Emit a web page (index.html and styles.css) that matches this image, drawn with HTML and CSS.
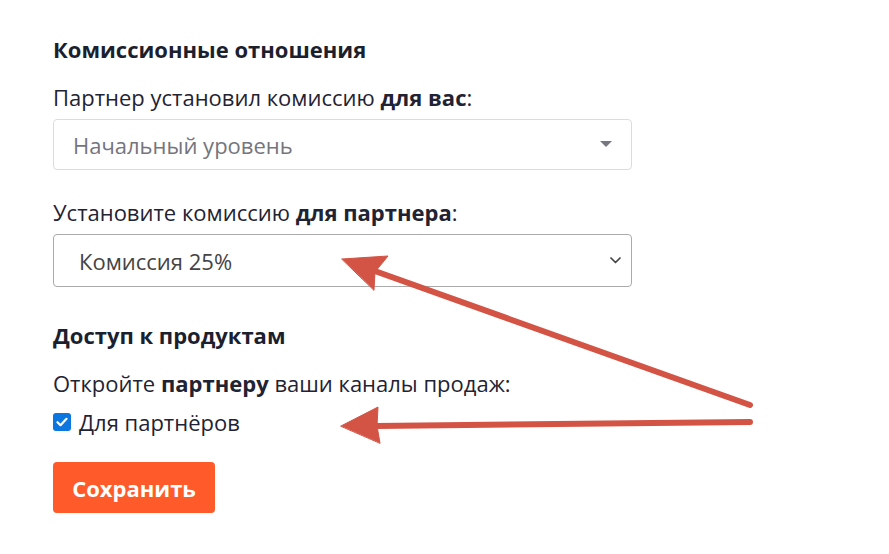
FILE: index.html
```html
<!DOCTYPE html>
<html lang="ru">
<head>
    <meta charset="UTF-8">
    <meta name="viewport" content="width=device-width, initial-scale=1.0">
    <title>Партнёрская программа</title>
    <link rel="stylesheet" href="styles.css">
</head>
<body>
    <main class="settings">
        <h2 class="section-title">Комиссионные отношения</h2>
        <p class="field-label">Партнер установил комиссию <b>для вас</b>:</p>
        <div class="select select-disabled">
            <span class="select-value">Начальный уровень</span>
            <svg class="caret" width="12" height="7" viewBox="0 0 12 7"><path d="M0 0h12L6 6z" fill="#77777f"/></svg>
        </div>

        <p class="field-label gap-top">Установите комиссию <b>для партнера</b>:</p>
        <div class="select">
            <span class="select-value value-indent">Комиссия 25%</span>
            <svg class="chevron" width="11" height="7" viewBox="0 0 11 7"><path d="M1 1l4.5 4.5L10 1" fill="none" stroke="#444" stroke-width="1.7" stroke-linecap="round" stroke-linejoin="round"/></svg>
        </div>

        <h2 class="section-title gap-section">Доступ к продуктам</h2>
        <p class="field-label">Откройте <b>партнеру</b> ваши каналы продаж:</p>
        <label class="check">
            <span class="check-box">
                <svg width="12" height="10" viewBox="0 0 12 10"><path d="M1.5 5.2l3 3L10.5 1.8" fill="none" stroke="#fff" stroke-width="2.2" stroke-linecap="round" stroke-linejoin="round"/></svg>
            </span>
            Для партнёров
        </label>

        <button class="btn-save">Сохранить</button>

        <!-- стрелки-подсказки поверх формы -->
        <svg class="pointers" width="889" height="554" viewBox="0 0 889 554">
            <g fill="#d35445" stroke="#d35445" stroke-linecap="round">
                <line x1="750" y1="405" x2="372" y2="270" stroke-width="6"/>
                <path d="M342 259 L388 256 L375 272 L374 290 Z" stroke-width="1"/>
                <line x1="750" y1="422" x2="376" y2="426" stroke-width="6"/>
                <path d="M341 426 L378 407 L377 426 L380 443 Z" stroke-width="1"/>
            </g>
        </svg>
    </main>
</body>
</html>
```

FILE: styles.css
```css
* {
    margin: 0;
    padding: 0;
    box-sizing: border-box;
}

body {
    font-family: 'Open Sans', 'Noto Sans', sans-serif;
    background: #fff;
    color: #1f2333;
}

.settings {
    position: relative;
    width: 889px;
    height: 554px;
    padding: 34px 0 0 53px;
}

.section-title {
    font-size: 22px;
    font-weight: 700;
    line-height: 30px;
    color: #1c1f2e;
}

.field-label {
    font-size: 22px;
    line-height: 30px;
    margin-top: 18px;
}

.field-label b {
    font-weight: 700;
}

.gap-top {
    margin-top: 27px;
}

.gap-section {
    margin-top: 33px;
}

.select {
    display: flex;
    align-items: center;
    justify-content: space-between;
    width: 579px;
    height: 53px;
    margin-top: 7px;
    padding: 0 10px 0 19px;
    border: 1px solid #aaa;
    border-radius: 4px;
    font-size: 22px;
    color: #444;
}

.select-disabled {
    height: 51px;
    border-color: #dcdcdc;
    color: #75757d;
    padding-right: 19px;
}

.value-indent {
    padding-left: 6px;
}

.check {
    display: flex;
    align-items: center;
    gap: 8px;
    margin-top: 9px;
    font-size: 22px;
    line-height: 30px;
}

.check-box {
    display: flex;
    align-items: center;
    justify-content: center;
    width: 18px;
    height: 18px;
    border-radius: 3px;
    background: #0b76e0;
}

.btn-save {
    display: block;
    margin-top: 25px;
    width: 162px;
    height: 51px;
    border: none;
    border-radius: 4px;
    background: #ff5a2a;
    color: #fff;
    font-family: 'Open Sans', sans-serif;
    font-size: 22px;
    font-weight: 700;
}

.pointers {
    position: absolute;
    top: 0;
    left: 0;
    pointer-events: none;
}
```
